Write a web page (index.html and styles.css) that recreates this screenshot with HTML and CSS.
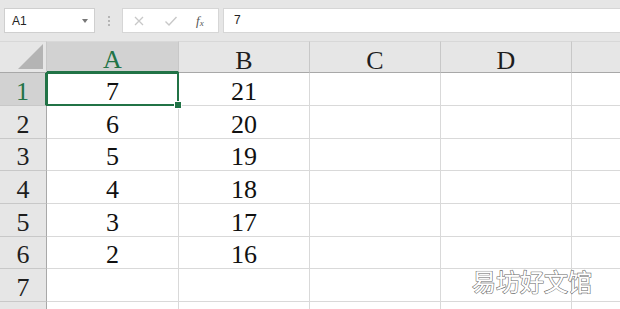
FILE: index.html
```html
<!DOCTYPE html>
<html>
<head>
<meta charset="utf-8">
<link rel="stylesheet" href="styles.css">
</head>
<body>
<div class="app">
  <div class="toolbar">
    <div class="namebox"><span>A1</span><span class="caret"></span></div>
    <div class="dots"><i></i><i></i><i></i></div>
    <div class="fxbox">
      <svg class="ico" width="12" height="12" viewBox="0 0 12 12"><path d="M2 2L10 10M10 2L2 10" stroke="#c8c8c8" stroke-width="1.3" fill="none"/></svg>
      <svg class="ico" width="14" height="12" viewBox="0 0 14 12"><path d="M1.5 6.5L5 10L12.5 2" stroke="#c8c8c8" stroke-width="1.4" fill="none"/></svg>
      <span class="fx">f<sub>x</sub></span>
    </div>
    <div class="formula">7</div>
  </div>
  <div class="grid">
    <div class="corner"><span class="tri"></span></div>
    <div class="ch sel">A</div>
    <div class="ch">B</div>
    <div class="ch">C</div>
    <div class="ch">D</div>
    <div class="ch last"></div>

    <div class="rh sel">1</div>
    <div class="c active">7</div><div class="c">21</div><div class="c"></div><div class="c"></div><div class="c last"></div>
    <div class="rh">2</div>
    <div class="c">6</div><div class="c">20</div><div class="c"></div><div class="c"></div><div class="c last"></div>
    <div class="rh">3</div>
    <div class="c">5</div><div class="c">19</div><div class="c"></div><div class="c"></div><div class="c last"></div>
    <div class="rh">4</div>
    <div class="c">4</div><div class="c">18</div><div class="c"></div><div class="c"></div><div class="c last"></div>
    <div class="rh">5</div>
    <div class="c">3</div><div class="c">17</div><div class="c"></div><div class="c"></div><div class="c last"></div>
    <div class="rh">6</div>
    <div class="c">2</div><div class="c">16</div><div class="c"></div><div class="c"></div><div class="c last"></div>
    <div class="rh">7</div>
    <div class="c"></div><div class="c"></div><div class="c"></div><div class="c"></div><div class="c last"></div>
    <div class="rh"></div>
    <div class="c"></div><div class="c"></div><div class="c"></div><div class="c"></div><div class="c last"></div>
  </div>
  <div class="watermark">易坊好文馆</div>
</div>
</body>
</html>
```

FILE: styles.css
```css
* { box-sizing: border-box; }
html, body { margin: 0; padding: 0; background: #fff; }
.app {
  position: relative;
  width: 620px;
  height: 309px;
  overflow: hidden;
}
.toolbar {
  height: 41px;
  background: #e6e6e6;
  display: flex;
  align-items: flex-start;
  padding-top: 8px;
  font-family: "Liberation Sans", Arial, sans-serif;
  font-size: 12px;
  color: #222;
}
.namebox {
  margin-left: 4px;
  width: 91px;
  height: 25px;
  background: #fff;
  border: 1px solid #cfcfcf;
  display: flex;
  align-items: center;
  justify-content: space-between;
  padding: 0 6px 0 7px;
}
.caret {
  width: 0; height: 0;
  border-left: 3.5px solid transparent;
  border-right: 3.5px solid transparent;
  border-top: 4px solid #777;
}
.dots {
  width: 27px;
  height: 25px;
  display: flex;
  flex-direction: column;
  align-items: center;
  justify-content: center;
  gap: 2px;
}
.dots i { display: block; width: 2px; height: 2px; background: #b5b5b5; }
.fxbox {
  width: 97px;
  height: 25px;
  background: #fff;
  border: 1px solid #d6d6d6;
  display: flex;
  align-items: center;
  padding-left: 10px;
}
.fxbox .ico:first-child { margin-right: 19px; }
.fxbox .ico:nth-child(2) { margin-right: 18px; }
.fx {
  font-family: "Liberation Serif", serif;
  font-style: italic;
  font-size: 13px;
  color: #555;
}
.fx sub { font-size: 9px; vertical-align: -1px; }
.formula {
  margin-left: 4px;
  flex: 1;
  height: 25px;
  background: #fff;
  border: 1px solid #d6d6d6;
  border-right: none;
  padding-left: 10px;
  line-height: 23px;
}
.grid {
  display: grid;
  grid-template-columns: 47px 132px 131px 131px 131px 60px;
  grid-template-rows: 32px 33px 33px 32px 33px 33px 32px 33px 33px;
  font-family: "Liberation Serif", "Times New Roman", serif;
  font-size: 26px;
  color: #111;
}
.corner {
  background: #e6e6e6;
  border-right: 1px solid #c8c8c8;
  border-bottom: 1px solid #a8a8a8;
  border-top: 1px solid #d8d8d8;
  position: relative;
}
.tri {
  position: absolute;
  right: 3px;
  bottom: 3px;
  width: 0; height: 0;
  border-left: 25px solid transparent;
  border-bottom: 25px solid #b4b4b4;
}
.ch {
  background: #e6e6e6;
  border-top: 1px solid #d8d8d8;
  border-right: 1px solid #c8c8c8;
  border-bottom: 1px solid #a8a8a8;
  display: flex;
  align-items: center;
  justify-content: center;
  padding-top: 7px;
  color: #1e1e1e;
}
.ch.sel {
  background: #d2d2d2;
  color: #217346;
  border-bottom: 2px solid #217346;
}
.rh {
  background: #e6e6e6;
  border-right: 1px solid #a8a8a8;
  border-bottom: 1px solid #c8c8c8;
  display: flex;
  align-items: center;
  justify-content: center;
  padding-top: 5px;
  color: #1e1e1e;
}
.rh.sel {
  background: #d2d2d2;
  color: #217346;
  border-right: 2px solid #217346;
}
.c {
  border-right: 1px solid #d9d9d9;
  border-bottom: 1px solid #d9d9d9;
  display: flex;
  align-items: center;
  justify-content: center;
  padding-top: 5px;
  position: relative;
}
.c.last { border-right: none; }
.c.active::after {
  content: "";
  position: absolute;
  left: -1px; top: -1px; right: -1px; bottom: -1px;
  border: 2px solid #217346;
}
.c.active::before {
  content: "";
  position: absolute;
  right: -4px;
  bottom: -4px;
  width: 6px;
  height: 6px;
  background: #217346;
  border: 1px solid #fff;
  z-index: 2;
}
.watermark {
  position: absolute;
  left: 472px;
  top: 263px;
  font-family: "Noto Sans CJK SC", sans-serif;
  font-size: 24px;
  color: #fff;
  -webkit-text-stroke: 1.2px #666;
  paint-order: stroke fill;
  text-shadow: 0 0 1px #aaa;
}
```
